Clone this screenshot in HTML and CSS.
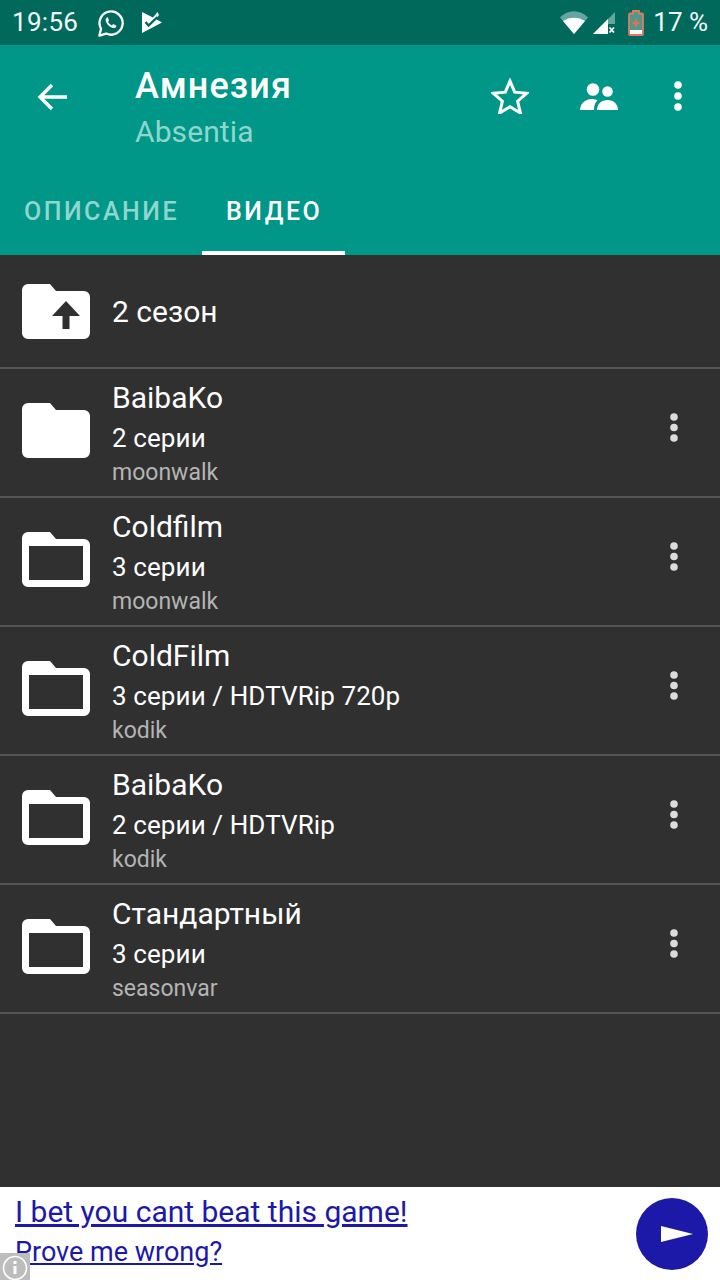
FILE: index.html
```html
<!DOCTYPE html>
<html lang="ru">
<head>
<meta charset="utf-8">
<title>Амнезия</title>
<link rel="stylesheet" href="styles.css">
</head>
<body>
<div class="phone">
  <div class="status">
    <span class="time">19:56</span>
    <svg class="ic-wa" viewBox="0 0 28 28"><path d="M2.500 26.500l1.700-7A12 12 0 1 1 9.500 24.400z" fill="none" stroke="#fff" stroke-width="2.400" stroke-linejoin="round"/><path d="M10.500 7.800c-1 .5-1.800 1.800-1.500 3.400.6 3 4.300 6.800 7.500 7.500 1.600.3 3-.5 3.500-1.600.2-.5.100-.9-.3-1.100l-2.400-1.200c-.4-.2-.7-.1-1 .2l-.8 1c-1.600-.6-3.200-2.100-4-3.700l.7-.9c.2-.3.300-.6.100-1l-1-2.300c-.2-.5-.8-.6-1.300-.3z" fill="#fff"/></svg>
    <svg class="ic-play" viewBox="0 0 20 21"><path d="M0 0l11 5.500L15.500 0l1.500 3-3 4 6 3.500L0 21z" fill="#fff"/><path d="M3.500 10l3 3.500L15.500 5" fill="none" stroke="#00695c" stroke-width="2.400"/></svg>
    <span class="spacer"></span>
    <svg class="ic-wifi" viewBox="0 0 28 23"><path d="M0 6.500C8-2 20-2 28 6.500L14 23z" fill="#fff" fill-opacity=".4"/><path d="M3 10c6.500-4.500 15.500-4.500 22 0L14 23z" fill="#fff"/></svg>
    <svg class="ic-signal" viewBox="0 0 22 22"><path d="M22 0v12h-7v10H0z" fill="#fff" fill-opacity=".4"/><path d="M15 7v15H0z" fill="#fff"/><path d="M16.500 15.500l4.500 5m0-5l-4.500 5" stroke="#fff" stroke-width="1.800"/></svg>
    <svg class="ic-batt" viewBox="0 0 16 26"><path d="M5 1h6v2.500h3a1 1 0 0 1 1 1V24a1 1 0 0 1-1 1H2a1 1 0 0 1-1-1V4.500a1 1 0 0 1 1-1h3z" fill="#4d9a8c" stroke="#e8785f" stroke-width="1.800"/><rect x="2" y="20" width="12" height="4" fill="#fff"/><path d="M8 9v8M4.500 13h7" stroke="#f0674a" stroke-width="2.200"/></svg>
    <span class="pct">17 %</span>
  </div>
  <header class="appbar">
    <div class="toolbar">
      <svg class="ic-back" viewBox="0 0 32 28"><path d="M30 14H3M15 2L3 14l12 12" fill="none" stroke="#fff" stroke-width="3.400"/></svg>
      <div class="titles">
        <div class="title">Амнезия</div>
        <div class="subtitle">Absentia</div>
      </div>
      <svg class="ic-star" viewBox="0 0 38 36"><path d="M19 3l4.700 11.200 12.100 1-9.200 8 2.800 11.800L19 28.700 8.600 35l2.800-11.800-9.200-8 12.100-1z" fill="none" stroke="#fff" stroke-width="3"/></svg>
      <svg class="ic-people" viewBox="0 0 38 27"><circle cx="13" cy="6.500" r="6.300" fill="#fff"/><circle cx="27.500" cy="8.500" r="5.300" fill="#fff"/><path d="M0 27c0-1 .5-3 1-4.500 1.500-3.500 6-6.500 10.500-6.500 2.500 0 4.500.5 6 1.500-2.500 2-3.500 5-3.500 9.500zM17 27c0-6 4.500-10 10.500-10S38 21 38 27z" fill="#fff"/></svg>
      <svg class="ic-more" viewBox="0 0 10 34"><circle cx="5" cy="5" r="3.800" fill="#fff"/><circle cx="5" cy="16" r="3.800" fill="#fff"/><circle cx="5" cy="27" r="3.800" fill="#fff"/></svg>
    </div>
    <nav class="tabs">
      <div class="tab tab-first">ОПИСАНИЕ</div>
      <div class="tab tab-active">ВИДЕО</div>
    </nav>
  </header>
  <main class="list">
    <div class="row row-up">
      <svg class="folder" viewBox="0 0 68 55"><path d="M6 0h22l6 7h28a6 6 0 0 1 6 6v36a6 6 0 0 1-6 6H6a6 6 0 0 1-6-6V6a6 6 0 0 1 6-6z" fill="#fff"/><path d="M44 17l14 15H47.500v13h-7V32H30z" fill="#303030"/></svg>
      <div class="name">2 сезон</div>
    </div>
    <div class="row">
      <svg class="folder" viewBox="0 0 68 55"><path d="M6 0h22l6 7h28a6 6 0 0 1 6 6v36a6 6 0 0 1-6 6H6a6 6 0 0 1-6-6V6a6 6 0 0 1 6-6z" fill="#fff"/></svg>
      <div class="info"><div class="name">BaibaKo</div><div class="meta">2 серии</div><div class="source">moonwalk</div></div>
      <svg class="dots" viewBox="0 0 10 32"><circle cx="5" cy="5" r="3.800"/><circle cx="5" cy="15.500" r="3.800"/><circle cx="5" cy="26" r="3.800"/></svg>
    </div>
    <div class="row">
      <svg class="folder" viewBox="0 0 68 55"><path d="M6 0h22l6 7h28a6 6 0 0 1 6 6v36a6 6 0 0 1-6 6H6a6 6 0 0 1-6-6V6a6 6 0 0 1 6-6zM7 14v34h54V14z" fill="#fff" fill-rule="evenodd"/></svg>
      <div class="info"><div class="name">Coldfilm</div><div class="meta">3 серии</div><div class="source">moonwalk</div></div>
      <svg class="dots" viewBox="0 0 10 32"><circle cx="5" cy="5" r="3.800"/><circle cx="5" cy="15.500" r="3.800"/><circle cx="5" cy="26" r="3.800"/></svg>
    </div>
    <div class="row">
      <svg class="folder" viewBox="0 0 68 55"><path d="M6 0h22l6 7h28a6 6 0 0 1 6 6v36a6 6 0 0 1-6 6H6a6 6 0 0 1-6-6V6a6 6 0 0 1 6-6zM7 14v34h54V14z" fill="#fff" fill-rule="evenodd"/></svg>
      <div class="info"><div class="name">ColdFilm</div><div class="meta">3 серии / HDTVRip 720p</div><div class="source">kodik</div></div>
      <svg class="dots" viewBox="0 0 10 32"><circle cx="5" cy="5" r="3.800"/><circle cx="5" cy="15.500" r="3.800"/><circle cx="5" cy="26" r="3.800"/></svg>
    </div>
    <div class="row">
      <svg class="folder" viewBox="0 0 68 55"><path d="M6 0h22l6 7h28a6 6 0 0 1 6 6v36a6 6 0 0 1-6 6H6a6 6 0 0 1-6-6V6a6 6 0 0 1 6-6zM7 14v34h54V14z" fill="#fff" fill-rule="evenodd"/></svg>
      <div class="info"><div class="name">BaibaKo</div><div class="meta">2 серии / HDTVRip</div><div class="source">kodik</div></div>
      <svg class="dots" viewBox="0 0 10 32"><circle cx="5" cy="5" r="3.800"/><circle cx="5" cy="15.500" r="3.800"/><circle cx="5" cy="26" r="3.800"/></svg>
    </div>
    <div class="row">
      <svg class="folder" viewBox="0 0 68 55"><path d="M6 0h22l6 7h28a6 6 0 0 1 6 6v36a6 6 0 0 1-6 6H6a6 6 0 0 1-6-6V6a6 6 0 0 1 6-6zM7 14v34h54V14z" fill="#fff" fill-rule="evenodd"/></svg>
      <div class="info"><div class="name">Стандартный</div><div class="meta">3 серии</div><div class="source">seasonvar</div></div>
      <svg class="dots" viewBox="0 0 10 32"><circle cx="5" cy="5" r="3.800"/><circle cx="5" cy="15.500" r="3.800"/><circle cx="5" cy="26" r="3.800"/></svg>
    </div>
  </main>
  <footer class="ad">
    <div class="ad-text">
      <a class="ad-link" href="#">I bet you cant beat this game!</a>
      <a class="ad-link ad-link-small" href="#">Prove me wrong?</a>
    </div>
    <div class="ad-btn"><svg class="ic-send" viewBox="0 0 32 16"><path d="M0 0l32 8L0 16z" fill="#fff"/></svg></div>
    <div class="ad-info"><svg viewBox="0 0 30 27"><circle cx="15" cy="15" r="11.500" fill="none" stroke="#fff" stroke-width="1.600"/><path d="M15 13v8M15 8v3" stroke="#fff" stroke-width="3"/></svg></div>
  </footer>
</div>
</body>
</html>
```

FILE: styles.css
```css
* { box-sizing: border-box; }
html, body { margin: 0; padding: 0; }
body { background: #303030; font-family: Roboto, "Noto Sans", sans-serif; }
.phone { width: 720px; height: 1280px; display: flex; flex-direction: column; overflow: hidden; background: #303030; }

.status { height: 45px; background: #00695c; display: flex; align-items: center; padding: 0 12px; color: #fff; flex: none; }
.time { font-size: 26px; line-height: 45px; letter-spacing: .3px; color: #f2f7f6; }
.ic-wa { width: 27px; height: 27px; margin-left: 19px; margin-top: 1px; }
.ic-play { width: 20px; height: 21px; margin-left: 18px; }
.spacer { flex: 1; }
.ic-wifi { width: 28px; height: 23px; margin-right: 5px; }
.ic-signal { width: 22px; height: 22px; margin-right: 13px; margin-top: 1px; }
.ic-batt { width: 16px; height: 26px; margin-right: 9px; }
.pct { font-size: 26px; line-height: 45px; color: #f2f7f6; }

.appbar { background: #009688; height: 210px; flex: none; display: flex; flex-direction: column; }
.toolbar { height: 120px; display: flex; align-items: flex-start; padding-left: 37px; }
.ic-back { width: 32px; height: 28px; margin-top: 38px; }
.titles { width: 355px; margin-left: 66px; padding-top: 20px; flex: none; }
.title { font-size: 36px; line-height: 42px; font-weight: 500; letter-spacing: 1.100px; color: #fff; }
.subtitle { font-size: 30px; line-height: 36px; margin-top: 7px; letter-spacing: .1px; color: #8fd6cd; }
.ic-star { width: 38px; height: 36px; margin-top: 33px; margin-left: 1px; }
.ic-people { width: 38px; height: 27px; margin-left: 51px; margin-top: 38px; }
.ic-more { width: 10px; height: 34px; margin-left: 55px; margin-top: 35px; }

.tabs { height: 90px; display: flex; }
.tab { height: 90px; padding: 0 24px; line-height: 94px; font-size: 25px; font-weight: 500; letter-spacing: 2.500px; color: #8fd6cd; }
.tab-first { padding-right: 23px; }
.tab-active { color: #fff; border-bottom: 4px solid #fff; padding-right: 23px; }

.list { flex: 1; }
.row { height: 129px; display: flex; align-items: center; padding-left: 22px; border-bottom: 2px solid #555; }
.row-up { height: 114px; }
.folder { width: 68px; height: 55px; flex: none; margin-bottom: 4px; }
.row-up .folder { margin-bottom: 0; }
.row-up .name { margin-left: 22px; margin-top: 2px; }
.info { margin-left: 22px; flex: 1; padding-top: 1px; }
.name { font-size: 30px; line-height: 40px; color: #fff; }
.meta { font-size: 26px; line-height: 36px; letter-spacing: .1px; color: #fff; margin-top: 2px; }
.source { font-size: 23px; line-height: 32px; color: #b4b4b4; margin-top: 1px; }
.dots { width: 10px; height: 32px; margin-right: 41px; margin-bottom: 10px; fill: #dcdcdc; flex: none; }

.ad { height: 93px; flex: none; background: #fff; display: flex; position: relative; align-items: center; padding-left: 15px; padding-right: 12px; }
.ad-text { flex: 1; display: flex; flex-direction: column; margin-top: -3px; }
.ad-link { font-size: 30px; line-height: 40px; color: #1d19a8; text-decoration: underline; display: block; }
.ad-link-small { font-size: 27px; }
.ad-btn { width: 72px; height: 72px; border-radius: 50%; background: #1d19a8; display: flex; align-items: center; justify-content: center; }
.ic-send { width: 32px; height: 16px; margin-left: 10px; }
.ad-info { position: absolute; left: 0; bottom: 0; width: 30px; height: 27px; background: #bdbdbd; }
.ad-info svg { display: block; width: 30px; height: 27px; }
```
